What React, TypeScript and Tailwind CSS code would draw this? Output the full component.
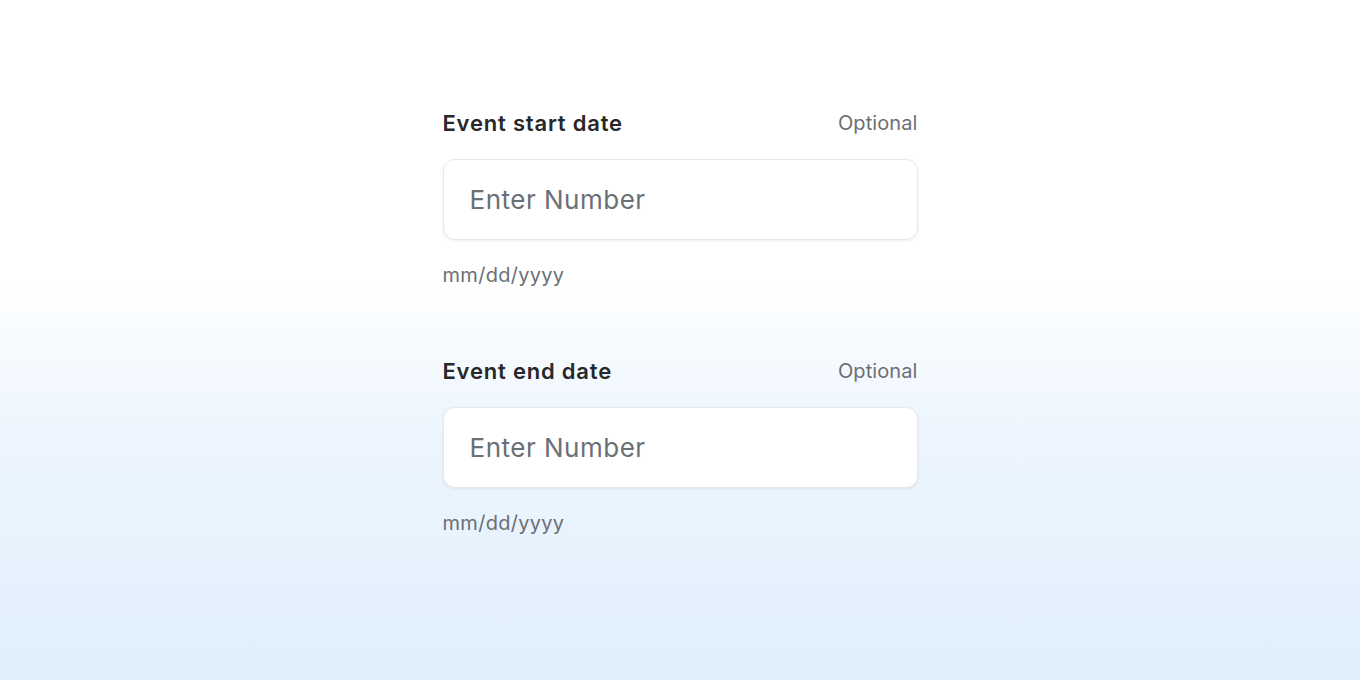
import React from 'react'

const fields = [
  { id: 'start', label: 'Event start date' },
  { id: 'end', label: 'Event end date' },
]

export default function App() {
  return (
    <div
      className="h-[680px] w-full bg-[linear-gradient(to_bottom,#ffffff_0%,#ffffff_41%,#eef6fe_62%,#e0effc_100%)] flex justify-center"
      style={{ fontFamily: 'Inter, "Noto Sans", sans-serif' }}
    >
      <div className="w-[475px] pt-[109px] flex flex-col gap-[70px]">
        {fields.map((f) => (
          <div key={f.id} className="flex flex-col">
            <div className="flex items-center justify-between h-7">
              <label htmlFor={f.id} className="text-[22px] font-semibold text-[#27272a] tracking-[0.8px]">
                {f.label}
              </label>
              <span className="text-[20px] text-[#6b6f76] tracking-[0.1px]">Optional</span>
            </div>
            <input
              id={f.id}
              type="text"
              placeholder="Enter Number"
              className="mt-[22px] h-[81px] w-full rounded-xl border border-[#e7e8ea] bg-white px-[26px] text-[26px] tracking-[0.5px] text-[#3f3f46] placeholder:text-[#6b6f76] shadow-[0_1px_3px_rgba(16,24,40,0.08)] outline-none"
            />
            <p className="mt-[23px] h-6 leading-6 text-[20px] tracking-[0.3px] text-[#6b6f76]">mm/dd/yyyy</p>
          </div>
        ))}
      </div>
    </div>
  )
}
